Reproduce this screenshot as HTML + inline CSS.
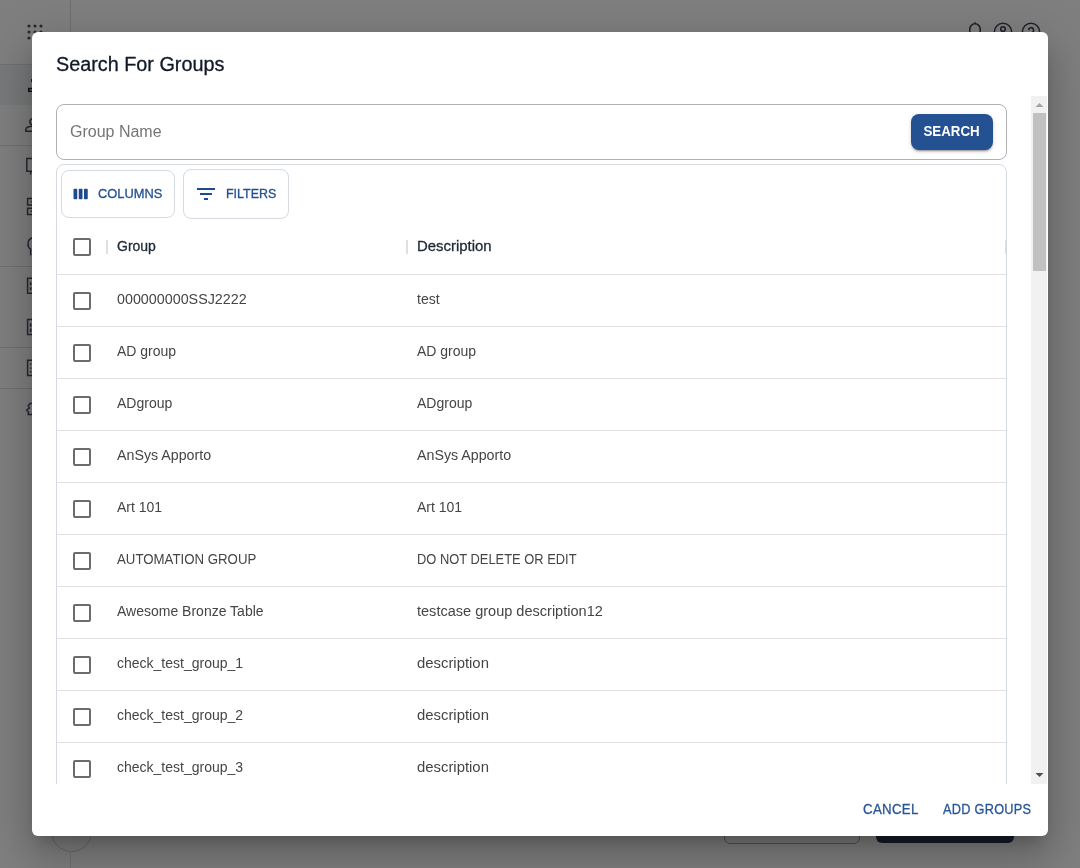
<!DOCTYPE html>
<html><head><meta charset="utf-8">
<style>
*{box-sizing:border-box;margin:0;padding:0}
html,body{width:1080px;height:868px;overflow:hidden;background:#fff;font-family:"Liberation Sans",sans-serif}
.abs{position:absolute}
#page{position:absolute;left:0;top:0;width:1080px;height:868px;background:#fff}
.hl{position:absolute;height:1px;background:#e0e0e0}
.vl{position:absolute;width:1px;background:#e0e0e0}
#overlay{position:absolute;left:0;top:0;width:1080px;height:868px;background:rgba(0,0,0,0.5)}
#dlg{will-change:transform;position:absolute;left:32px;top:32px;width:1016px;height:804px;background:#fff;border-radius:6px;
 box-shadow:0px 11px 15px -7px rgba(0,0,0,0.2),0px 24px 38px 3px rgba(0,0,0,0.14),0px 9px 46px 8px rgba(0,0,0,0.12);overflow:hidden}
#title{position:absolute;left:24px;top:20px;font-size:20px;line-height:24px;color:#111827;white-space:nowrap;transform:scaleX(0.99);transform-origin:0 0}
#content{position:absolute;left:0;top:64px;width:1016px;height:688px;overflow:hidden}
#search{position:absolute;left:24px;top:8px;width:951px;height:56px;border:1px solid #b0b0b0;border-radius:8px}
#ph{position:absolute;left:13px;top:17px;font-size:16px;line-height:20px;color:#757575;white-space:nowrap}
#sbtn{position:absolute;left:854px;top:9px;width:82px;height:36px;background:#245192;border-radius:8px;color:#fff;font-weight:bold;font-size:14px;line-height:35px;text-align:center;
 box-shadow:0px 3px 1px -2px rgba(0,0,0,0.2),0px 2px 2px 0px rgba(0,0,0,0.14),0px 1px 5px 0px rgba(0,0,0,0.12)}
#grid{position:absolute;left:24px;top:68px;width:951px;height:700px;border:1px solid #d5d9e0;border-radius:8px}
.tbtn{position:absolute;height:48px;border:1px solid #d5d9e0;border-radius:8px;color:#245192;font-size:13px;line-height:46px;white-space:nowrap}
.tbtn svg{position:absolute}
.tbtn span{position:absolute;top:0}
.cb{position:absolute;width:18px;height:18px;border:2px solid #6b6d6c;border-radius:2px}
.row{position:absolute;left:0;width:949px;height:52px;border-top:1px solid #e0e0e0}
.cell{position:absolute;font-size:14px;line-height:20px;color:#454545;white-space:nowrap}
.hsep{position:absolute;width:2px;height:14px;background:#e0e0e0}
.hdr{position:absolute;font-size:14px;line-height:20px;color:#1f2937;white-space:nowrap}
#track{position:absolute;left:999px;top:0;width:16px;height:688px;background:#f1f1f1}
#thumb{position:absolute;left:2px;top:17px;width:13px;height:158px;background:#c1c1c1}
.fbtn{position:absolute;top:767px;font-size:14px;line-height:20px;color:#2b5797;letter-spacing:0.3px;white-space:nowrap}
.med{-webkit-text-stroke:0.3px currentColor}
</style></head><body>
<div id="page">
  <!-- sidebar -->
  <div class="vl" style="left:70px;top:0;height:811px"></div>
  <div class="hl" style="left:0;top:64px;width:70px"></div>
  <div class="abs" style="left:0;top:65px;width:70px;height:40px;background:#f0f2f5"></div>
  <div class="hl" style="left:0;top:145px;width:70px"></div>
  <div class="hl" style="left:0;top:266px;width:70px"></div>
  <div class="hl" style="left:0;top:347px;width:70px"></div>
  <div class="hl" style="left:0;top:388px;width:70px"></div>
  <!-- dots grid -->
  <svg class="abs" style="left:24px;top:20px" width="24" height="24" viewBox="0 0 24 24">
    <g fill="#4b5260"><circle cx="5" cy="6" r="1.6"/><circle cx="11" cy="6" r="1.6"/><circle cx="17" cy="6" r="1.6"/>
    <circle cx="5" cy="12" r="1.6"/><circle cx="11" cy="12" r="1.6"/><circle cx="17" cy="12" r="1.6"/>
    <circle cx="5" cy="18" r="1.6"/><circle cx="11" cy="18" r="1.6"/><circle cx="17" cy="18" r="1.6"/></g>
  </svg>
  <!-- sidebar icons (partially hidden) -->
  <svg class="abs" style="left:0;top:0" width="70" height="440" viewBox="0 0 70 440" fill="none" stroke="#4b5260" stroke-width="1.5">
    <path d="M33 88.5H28.8V91.2H33" stroke="#14223d" stroke-width="1.6"/>
    <path d="M31.5 79v3" stroke-width="1" stroke="#3a3f48"/>
    <path d="M33 118.5a3.6 3.6 0 0 0 -3.2 3.3a3.6 3.6 0 0 0 3.2 3.3"/>
    <path d="M33 126.3C28.5 126.3 25.8 127.8 25.8 129.6V131.3H33"/>
    <path d="M33 158.6H26.8V171.2H33M30.6 171.2V174.6"/>
    <path d="M33 198.5H27.6V205H33M33 208.2H27.6V214.6H33"/>
    <path d="M30.6 201.7h1.2M30.6 211.2h1.2" stroke-width="1.8"/>
    <path d="M33 237.8a6.2 6.2 0 0 0 -5 6.2a6 6 0 0 0 2.6 5.2V255.3"/>
    <path d="M33 278.2H27.6V293.2H33"/>
    <path d="M30.6 282.2v3M30.6 287.2v3" stroke-width="1.6"/>
    <path d="M33 319.4H27.6V334.4H33"/>
    <path d="M30.6 323.2v3.5M30.6 328.4v3.5" stroke-width="1.6"/>
    <path d="M33 360.3H27.6V375.6H33"/>
    <path d="M30.6 363.4v1.4M30.6 367.4v1.4M30.6 371v1.4" stroke-width="1.6"/>
    <path d="M33 403.6H30L28.2 405.8L29.4 408L26.6 410L28.6 412.2L28.2 414.6H33"/>
  </svg>
  <!-- top right icons -->
  <svg class="abs" style="left:950px;top:0" width="100" height="40" viewBox="0 0 100 40" fill="none" stroke="#3f4652" stroke-width="1.6">
    <path d="M19.8 34V29a5.2 5.2 0 0 1 10.4 0v5"/><path d="M25 22.3v1.6"/>
    <circle cx="53" cy="31.8" r="8.6"/><circle cx="53" cy="29" r="2.3"/>
    <circle cx="81" cy="31.8" r="8.6"/><path d="M78.6 30.2a2.5 2.5 0 1 1 3.6 2.2"/>
  </svg>
  <!-- bottom buttons -->
  <div class="abs" style="left:724px;top:807px;width:136px;height:37px;border:1px solid #9ca3af;border-radius:6px"></div>
  <div class="abs" style="left:876px;top:807px;width:138px;height:36px;background:#283850;border-radius:6px"></div>
  <div class="abs" style="left:51px;top:811px;width:41px;height:41px;border:1px solid #cfcfcf;border-radius:50%"></div>
  <div class="vl" style="left:70px;top:851px;height:17px"></div>
</div>
<div id="overlay"></div>
<div id="dlg">
  <div id="title" class="med">Search For Groups</div>
  <div id="content">
    <div id="search">
      <div id="ph">Group Name</div>
      <div id="sbtn"><span style="display:inline-block;transform:scaleX(0.95)">SEARCH</span></div>
    </div>
    <div id="grid">
      <div class="tbtn" style="left:4px;top:5px;width:114px">
        <svg style="left:10px;top:14px" width="18" height="18" viewBox="0 0 24 24"><path fill="#1e4b8f" d="M6 5H3c-.55 0-1 .45-1 1v12c0 .55.45 1 1 1h3c.55 0 1-.45 1-1V6c0-.55-.45-1-1-1zm14 0h-3c-.55 0-1 .45-1 1v12c0 .55.45 1 1 1h3c.55 0 1-.45 1-1V6c0-.55-.45-1-1-1zm-7 0h-3c-.55 0-1 .45-1 1v12c0 .55.45 1 1 1h3c.55 0 1-.45 1-1V6c0-.55-.45-1-1-1z"/></svg>
        <span class="med" style="left:35.5px;transform:scaleX(0.99);transform-origin:0 0;">COLUMNS</span>
      </div>
      <div class="tbtn" style="left:126px;top:4px;width:106px;height:50px">
        <svg style="left:10px;top:12px" width="24" height="24" viewBox="0 0 24 24"><path fill="#1e4b8f" d="M10 18h4v-2h-4v2zM3 6v2h18V6H3zm3 7h12v-2H6v2z"/></svg>
        <span class="med" style="left:42px;line-height:48px;transform:scaleX(0.96);transform-origin:0 0;">FILTERS</span>
      </div>
      <!-- header -->
      <div class="cb" style="left:16px;top:73px"></div>
      <div class="hsep" style="left:49px;top:75px"></div>
      <div class="hdr med" style="left:60px;top:71px">Group</div>
      <div class="hsep" style="left:349px;top:75px"></div>
      <div class="hdr med" style="left:360px;top:71px;transform:scaleX(1.066);transform-origin:0 0;">Description</div>
      <div class="hsep" style="left:948px;top:75px;width:1px;background:#dadde2"></div>
      <div id="rows">
<div class="row" style="top:109px"><div class="cb" style="left:16px;top:17px"></div><div class="cell" style="left:60px;top:14px;transform:scaleX(1.022);transform-origin:0 0;">000000000SSJ2222</div><div class="cell" style="left:360px;top:14px">test</div></div>
<div class="row" style="top:161px"><div class="cb" style="left:16px;top:17px"></div><div class="cell" style="left:60px;top:14px">AD group</div><div class="cell" style="left:360px;top:14px">AD group</div></div>
<div class="row" style="top:213px"><div class="cb" style="left:16px;top:17px"></div><div class="cell" style="left:60px;top:14px">ADgroup</div><div class="cell" style="left:360px;top:14px">ADgroup</div></div>
<div class="row" style="top:265px"><div class="cb" style="left:16px;top:17px"></div><div class="cell" style="left:60px;top:14px;transform:scaleX(1.016);transform-origin:0 0;">AnSys Apporto</div><div class="cell" style="left:360px;top:14px;transform:scaleX(1.016);transform-origin:0 0;">AnSys Apporto</div></div>
<div class="row" style="top:317px"><div class="cb" style="left:16px;top:17px"></div><div class="cell" style="left:60px;top:14px">Art 101</div><div class="cell" style="left:360px;top:14px">Art 101</div></div>
<div class="row" style="top:369px"><div class="cb" style="left:16px;top:17px"></div><div class="cell" style="left:60px;top:14px;transform:scaleX(0.946);transform-origin:0 0;">AUTOMATION GROUP</div><div class="cell" style="left:360px;top:14px;transform:scaleX(0.921);transform-origin:0 0;">DO NOT DELETE OR EDIT</div></div>
<div class="row" style="top:421px"><div class="cb" style="left:16px;top:17px"></div><div class="cell" style="left:60px;top:14px">Awesome Bronze Table</div><div class="cell" style="left:360px;top:14px;transform:scaleX(1.038);transform-origin:0 0;">testcase group description12</div></div>
<div class="row" style="top:473px"><div class="cb" style="left:16px;top:17px"></div><div class="cell" style="left:60px;top:14px">check_test_group_1</div><div class="cell" style="left:360px;top:14px;transform:scaleX(1.062);transform-origin:0 0;">description</div></div>
<div class="row" style="top:525px"><div class="cb" style="left:16px;top:17px"></div><div class="cell" style="left:60px;top:14px">check_test_group_2</div><div class="cell" style="left:360px;top:14px;transform:scaleX(1.062);transform-origin:0 0;">description</div></div>
<div class="row" style="top:577px"><div class="cb" style="left:16px;top:17px"></div><div class="cell" style="left:60px;top:14px">check_test_group_3</div><div class="cell" style="left:360px;top:14px;transform:scaleX(1.062);transform-origin:0 0;">description</div></div>
<div class="row" style="top:629px"><div class="cb" style="left:16px;top:17px"></div><div class="cell" style="left:60px;top:14px">check_test_group_4</div><div class="cell" style="left:360px;top:14px;transform:scaleX(1.062);transform-origin:0 0;">description</div></div>
</div>
    </div>
    <div id="track"><div id="thumb"></div><svg style="position:absolute;left:0;top:0" width="16" height="688"><path d="M4.5 11 L8.5 7 L12.5 11 Z" fill="#a3a3a3"/><path d="M4.5 677 L8.5 681 L12.5 677 Z" fill="#505050"/></svg></div>
  </div>
  <div class="fbtn med" style="left:830.5px;transform:scaleX(0.95);transform-origin:0 0;">CANCEL</div>
  <div class="fbtn med" style="left:911px;transform:scaleX(0.91);transform-origin:0 0;">ADD GROUPS</div>
</div>
</body></html>
